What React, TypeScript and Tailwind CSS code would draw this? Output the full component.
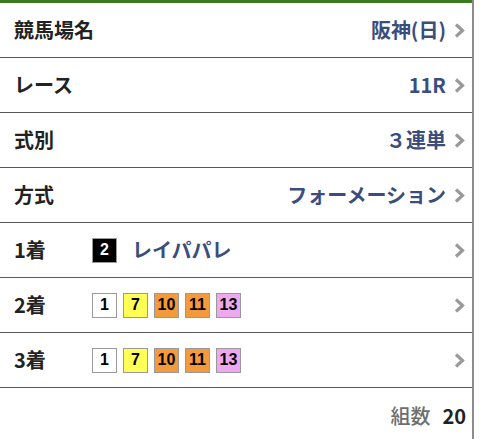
import React from 'react';

const font = { fontFamily: '"Noto Sans CJK JP", "Noto Sans", sans-serif' };

function Chevron() {
  return (
    <svg width="11" height="15" viewBox="0 0 11 15" className="shrink-0">
      <polyline points="2,1.5 8.5,7.5 2,13.5" fill="none" stroke="#9a9a9a" strokeWidth="3.2" />
    </svg>
  );
}

function Row({ label, value }: { label: string; value: string }) {
  return (
    <div className="h-[55px] flex items-center border-b border-[#5a5a5a] pl-[14px] pr-[7px]">
      <span className="text-[20px] font-bold text-[#222]">{label}</span>
      <span className="ml-auto text-[20px] font-bold text-[#3a4d7c] mr-[8px]">{value}</span>
      <Chevron />
    </div>
  );
}

const boxColors: Record<number, string> = {
  1: 'bg-white text-black',
  2: 'bg-black text-white',
  7: 'bg-[#ffff55] text-black',
  10: 'bg-[#f29a3c] text-black',
  11: 'bg-[#f29a3c] text-black',
  13: 'bg-[#eea8f0] text-black',
};

function NumBox({ n }: { n: number }) {
  return (
    <span
      className={`w-[25px] h-[25px] flex items-center justify-center border border-[#999] text-[16px] leading-none font-bold font-['Liberation_Sans',Arial,sans-serif] ${boxColors[n]}`}
    >
      {n}
    </span>
  );
}

function PlaceRow({ label, children }: { label: string; children: React.ReactNode }) {
  return (
    <div className="h-[55px] flex items-center border-b border-[#5a5a5a] pl-[14px] pr-[7px]">
      <span className="w-[78px] text-[20px] font-bold text-[#222]">{label}</span>
      <div className="flex items-center gap-[6px]">{children}</div>
      <span className="ml-auto"><Chevron /></span>
    </div>
  );
}

export default function App() {
  return (
    <div className="w-[480px] h-[439px] bg-white flex overflow-hidden" style={font}>
      <div className="w-[474px] border-r-2 border-[#8c8c8c] flex flex-col">
        <div className="h-[3px] bg-[#3c7a1e]" />
        <Row label="競馬場名" value="阪神(日)" />
        <Row label="レース" value="11R" />
        <Row label="式別" value="３連単" />
        <Row label="方式" value="フォーメーション" />
        <PlaceRow label="1着">
          <NumBox n={2} />
          <span className="ml-[9px] text-[20px] font-bold text-[#3a4d7c]">レイパパレ</span>
        </PlaceRow>
        <PlaceRow label="2着">
          {[1, 7, 10, 11, 13].map((n) => <NumBox key={n} n={n} />)}
        </PlaceRow>
        <PlaceRow label="3着">
          {[1, 7, 10, 11, 13].map((n) => <NumBox key={n} n={n} />)}
        </PlaceRow>
        <div className="flex items-center justify-end pt-[13px] pr-[6px]">
          <span className="text-[20px] text-[#6e6e6e] font-medium">組数</span>
          <span className="ml-[12px] text-[20px] font-bold text-[#222]">20</span>
        </div>
      </div>
    </div>
  );
}
